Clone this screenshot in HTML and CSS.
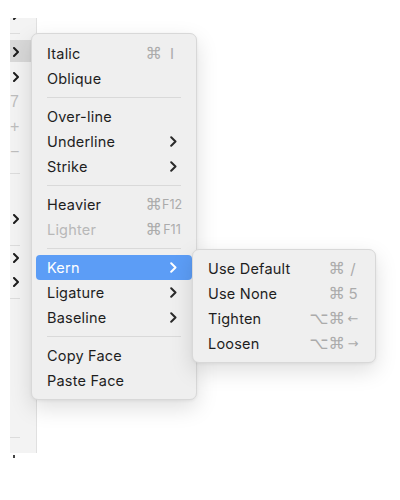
FILE: index.html
```html
<!DOCTYPE html>
<html lang="en">
<head>
<meta charset="utf-8">
<title>Font menu</title>
<link rel="stylesheet" href="styles.css">
</head>
<body>
<div class="stage">
  <aside class="sidebar">
    <div class="cap"><svg class="schev cut" viewBox="0 0 6 10" width="6" height="10"><polyline points="1,1 5,5 1,9"/></svg></div>
    <div class="ssep"></div>
    <div class="srow first sel"><svg class="schev" viewBox="0 0 6 10" width="6" height="10"><polyline points="1,1 5,5 1,9"/></svg></div>
    <div class="srow"><svg class="schev" viewBox="0 0 6 10" width="6" height="10"><polyline points="1,1 5,5 1,9"/></svg></div>
    <div class="srow num">7</div>
    <div class="srow num">+</div>
    <div class="srow num">−</div>
    <div class="ssep s2"></div>
    <div class="srow s3"><svg class="schev" viewBox="0 0 6 10" width="6" height="10"><polyline points="1,1 5,5 1,9"/></svg></div>
    <div class="ssep s4"></div>
    <div class="srow short"><svg class="schev" viewBox="0 0 6 10" width="6" height="10"><polyline points="1,1 5,5 1,9"/></svg></div>
    <div class="srow short"><svg class="schev" viewBox="0 0 6 10" width="6" height="10"><polyline points="1,1 5,5 1,9"/></svg></div>
    <div class="ssep s5"></div>
    <div class="ssep last"></div>
  </aside>
  <div class="tick"></div>

  <div class="menu main">
    <div class="item"><span class="label">Italic</span><span class="keys"><span class="mod">⌘</span><span class="key">I</span></span></div>
    <div class="item"><span class="label">Oblique</span></div>
    <div class="sep"></div>
    <div class="item"><span class="label">Over-line</span></div>
    <div class="item"><span class="label">Underline</span><svg class="chev" viewBox="0 0 7 11" width="7" height="11"><polyline points="1.2,1.2 5.5,5.5 1.2,9.8"/></svg></div>
    <div class="item"><span class="label">Strike</span><svg class="chev" viewBox="0 0 7 11" width="7" height="11"><polyline points="1.2,1.2 5.5,5.5 1.2,9.8"/></svg></div>
    <div class="sep"></div>
    <div class="item"><span class="label">Heavier</span><span class="keys"><span class="mod">⌘</span><span class="key fkey">F12</span></span></div>
    <div class="item disabled"><span class="label">Lighter</span><span class="keys"><span class="mod">⌘</span><span class="key fkey">F11</span></span></div>
    <div class="sep"></div>
    <div class="item active"><span class="label">Kern</span><svg class="chev" viewBox="0 0 7 11" width="7" height="11"><polyline points="1.2,1.2 5.5,5.5 1.2,9.8"/></svg></div>
    <div class="item"><span class="label">Ligature</span><svg class="chev" viewBox="0 0 7 11" width="7" height="11"><polyline points="1.2,1.2 5.5,5.5 1.2,9.8"/></svg></div>
    <div class="item"><span class="label">Baseline</span><svg class="chev" viewBox="0 0 7 11" width="7" height="11"><polyline points="1.2,1.2 5.5,5.5 1.2,9.8"/></svg></div>
    <div class="sep"></div>
    <div class="item"><span class="label">Copy Face</span></div>
    <div class="item"><span class="label">Paste Face</span></div>
  </div>

  <div class="menu sub">
    <div class="item"><span class="label">Use Default</span><span class="keys"><span class="mod">⌘</span><span class="key">/</span></span></div>
    <div class="item"><span class="label">Use None</span><span class="keys"><span class="mod">⌘</span><span class="key">5</span></span></div>
    <div class="item"><span class="label">Tighten</span><span class="keys"><span class="mod">⌥⌘</span><span class="key arrow">←</span></span></div>
    <div class="item"><span class="label">Loosen</span><span class="keys"><span class="mod">⌥⌘</span><span class="key arrow">→</span></span></div>
  </div>
</div>
</body>
</html>
```

FILE: styles.css
```css
html, body {
  margin: 0;
  padding: 0;
  background: #ffffff;
}

body {
  font-family: "Inter", "Liberation Sans", sans-serif;
  color: #1e1e1e;
}

.stage {
  position: relative;
  width: 400px;
  height: 500px;
  overflow: hidden;
}

/* background sidebar strip */
.sidebar {
  margin: 18px 0 0 10px;
  width: 26px;
  height: 435px;
  background: #f3f3f3;
  border-right: 1px solid #e0e0e0;
  display: flex;
  flex-direction: column;
}

.cap {
  height: 15px;
  overflow: hidden;
  display: flex;
  align-items: flex-start;
  padding-left: 3px;
}

.schev {
  display: block;
}

.schev polyline {
  fill: none;
  stroke: #1c1c1c;
  stroke-width: 2;
  stroke-linecap: round;
  stroke-linejoin: round;
}

.schev.cut {
  margin-top: -8px;
}

.ssep {
  height: 1px;
  width: 10px;
  background: #dcdcdc;
  flex: none;
}

.srow {
  height: 25px;
  flex: none;
  display: flex;
  align-items: center;
  padding-left: 3px;
  box-sizing: border-box;
}

.srow.first {
  margin-top: 5px;
}

.srow.sel {
  background: linear-gradient(#d8d8d8, #d8d8d8) no-repeat 0 1px / 100% 22px;
}

.srow.num {
  font-family: "Liberation Sans", sans-serif;
  font-size: 16px;
  color: #bdbdbd;
  padding-left: 0;
}

.ssep.s2 {
  margin-top: 9px;
}

.srow.s3 {
  margin-top: 32px;
}

.ssep.s4 {
  margin-top: 14px;
}

.srow.short {
  height: 24px;
}

.ssep.s5 {
  margin-top: 4px;
}

.ssep.last {
  margin-top: auto;
  margin-bottom: 15px;
}

.tick {
  margin: 2px 0 0 13px;
  width: 2px;
  height: 3px;
  background: #444;
}

/* menus */
.menu {
  position: absolute;
  box-sizing: border-box;
  background: #efefef;
  border: 1px solid #d8d8d8;
  border-radius: 7px;
  padding: 7px 4px 6px;
  box-shadow: 0 8px 22px rgba(0, 0, 0, 0.13), 0 1px 3px rgba(0, 0, 0, 0.06);
  font-size: 14.5px;
  font-weight: 400;
}

.menu.main {
  left: 31px;
  top: 33px;
  width: 166px;
}

.menu.sub {
  left: 192px;
  top: 249px;
  width: 184px;
  padding-top: 6px;
}

.item {
  height: 25px;
  display: flex;
  align-items: center;
  padding: 0 10px 0 11px;
  border-radius: 4px;
  white-space: nowrap;
}

.label {
  flex: 1;
  letter-spacing: 0.2px;
}

.chev {
  margin-right: 5px;
  display: block;
}

.chev polyline {
  fill: none;
  stroke: #2a2a2a;
  stroke-width: 2;
  stroke-linecap: round;
  stroke-linejoin: round;
}

.item.active {
  background: #5c9df6;
  color: #ffffff;
}

.item.active .chev polyline {
  stroke: #ffffff;
}

.item.disabled {
  color: #b8b8b8;
}

.keys {
  display: flex;
  align-items: center;
  color: #ababab;
}

.mod {
  font-family: "DejaVu Sans", sans-serif;
  font-size: 16.5px;
  font-weight: 400;
  letter-spacing: 0;
}

.key {
  display: inline-block;
  width: 20px;
  text-align: center;
  font-size: 15px;
  font-weight: 400;
}

.key.fkey {
  font-size: 12.5px;
}

.sub .key {
  width: 16px;
}

.key.arrow {
  font-family: "DejaVu Sans", sans-serif;
  font-size: 13px;
}

.sep {
  height: 1px;
  background: #d9d9d9;
  margin: 6px 11px 6px 11px;
}
```
